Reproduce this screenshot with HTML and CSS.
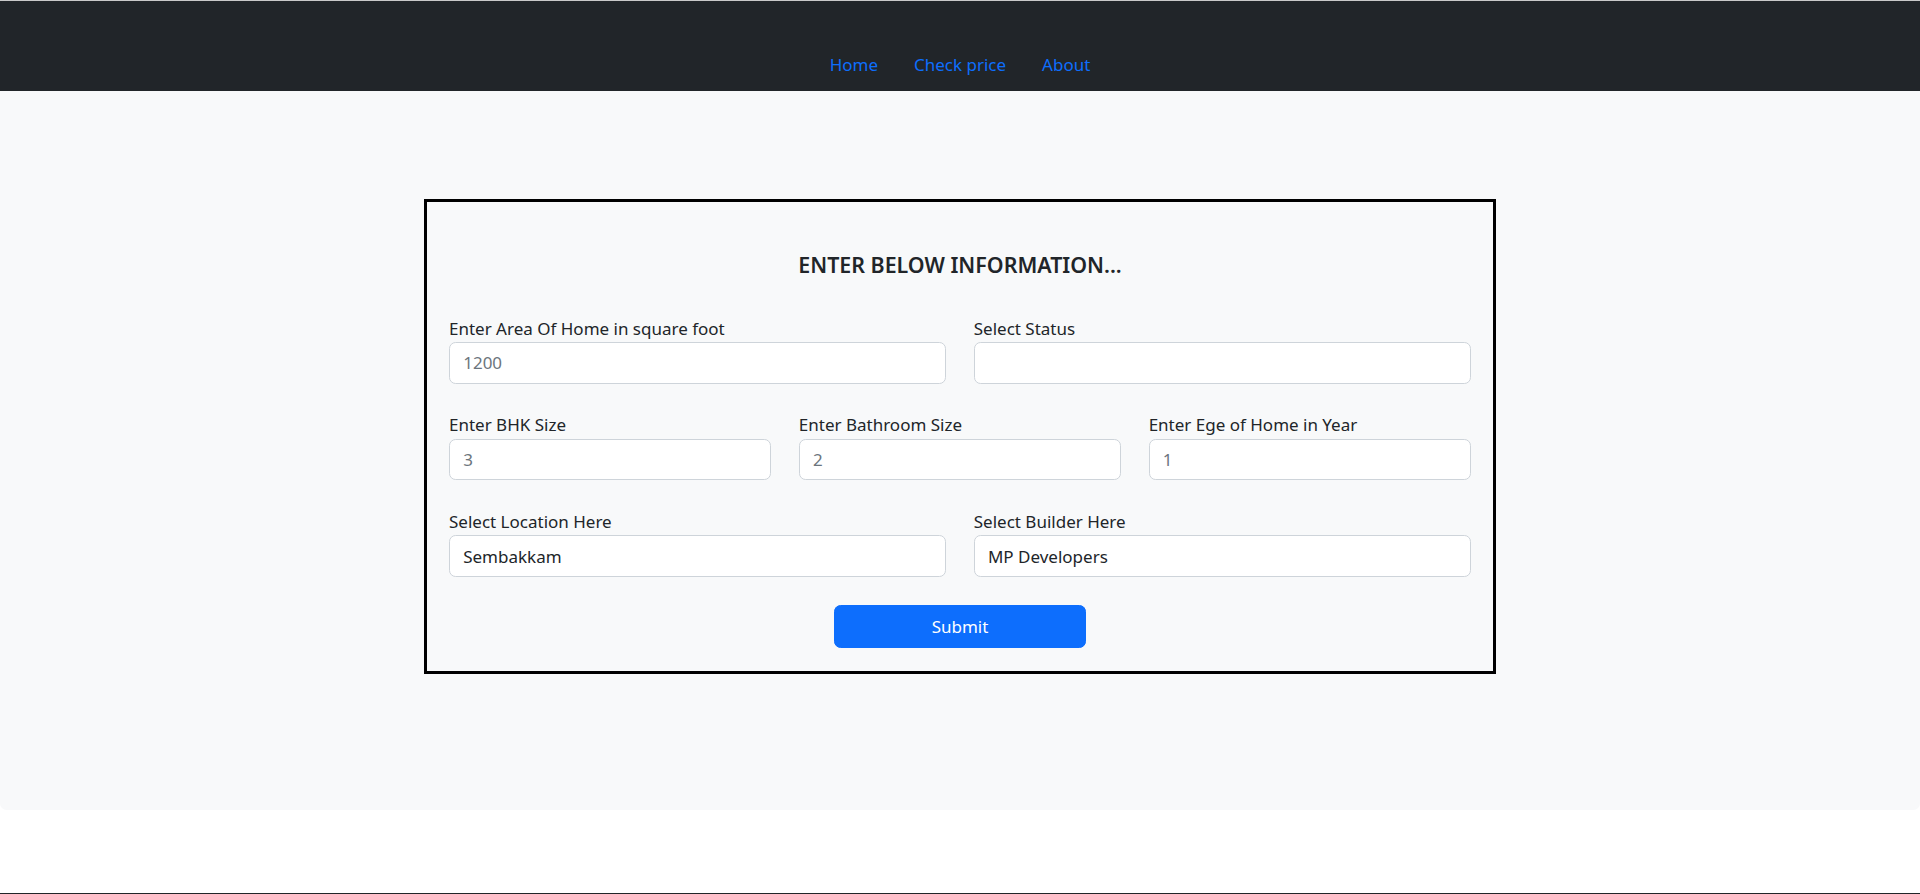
FILE: index.html
```html
<!DOCTYPE html>
<html lang="en">
<head>
<meta charset="utf-8">
<title>Home Price</title>
<link rel="stylesheet" href="styles.css">
</head>
<body>
<nav class="navbar">
  <ul class="nav-list">
    <li><a class="nav-link" href="#">Home</a></li>
    <li><a class="nav-link" href="#">Check price</a></li>
    <li><a class="nav-link" href="#">About</a></li>
  </ul>
</nav>
<main class="main">
  <form class="card">
    <h5 class="card-title">ENTER BELOW INFORMATION...</h5>
    <div class="form-row cols-2">
      <div class="field">
        <label class="form-label">Enter Area Of Home in square foot</label>
        <input class="form-control" type="text" placeholder="1200">
      </div>
      <div class="field">
        <label class="form-label">Select Status</label>
        <input class="form-control" type="text">
      </div>
    </div>
    <div class="form-row cols-3">
      <div class="field">
        <label class="form-label">Enter BHK Size</label>
        <input class="form-control" type="text" placeholder="3">
      </div>
      <div class="field">
        <label class="form-label">Enter Bathroom Size</label>
        <input class="form-control" type="text" placeholder="2">
      </div>
      <div class="field">
        <label class="form-label">Enter Ege of Home in Year</label>
        <input class="form-control" type="text" placeholder="1">
      </div>
    </div>
    <div class="form-row cols-2">
      <div class="field">
        <label class="form-label">Select Location Here</label>
        <input class="form-control" type="text" value="Sembakkam">
      </div>
      <div class="field">
        <label class="form-label">Select Builder Here</label>
        <input class="form-control" type="text" value="MP Developers">
      </div>
    </div>
    <button class="btn-submit" type="button">Submit</button>
  </form>
</main>
<footer class="footer"></footer>
</body>
</html>
```
FILE: styles.css
```css
* { box-sizing: border-box; }

html, body {
  margin: 0;
  padding: 0;
}

body {
  background: #ffffff;
  color: #212529;
  font-family: "Noto Sans", "Open Sans", sans-serif;
  font-size: 17px;
  line-height: 26.4px;
}

.navbar {
  background: #212529;
  border-top: 1px solid #c9c9c9;
  padding: 51px 0 12.6px;
}

.nav-list {
  list-style: none;
  margin: 0;
  padding: 0;
  display: flex;
  justify-content: center;
}

.nav-link {
  display: block;
  padding: 0 18px;
  color: #0d6efd;
  text-decoration: none;
  line-height: 26.4px;
}

.main {
  background: #f8f9fa;
  border-radius: 0 0 6.6px 6.6px;
  padding: 108px 0 136px;
}

.card {
  width: 1072px;
  margin: 0 0 0 calc(50% - 536px);
  border: 3px solid #000000;
  padding: 22px 22px 23px;
}

.card-title {
  margin: 27.7px 0 37.5px;
  text-align: center;
  font-size: 21.4px;
  line-height: 26.4px;
  font-weight: 600;
  color: #212529;
}

.form-row {
  display: grid;
  column-gap: 27.5px;
  margin-bottom: 28.4px;
}

.cols-2 { grid-template-columns: 1fr 1fr; }
.cols-3 { grid-template-columns: 1fr 1fr 1fr; }

.field {
  display: flex;
  flex-direction: column;
}

.form-label {
  display: block;
  line-height: 26.4px;
  color: #212529;
}

.form-control {
  display: block;
  width: 100%;
  height: 41.8px;
  padding: 6.6px 13.2px;
  font-family: inherit;
  font-size: 17px;
  line-height: 26.4px;
  color: #212529;
  background: #ffffff;
  border: 1px solid #ced4da;
  border-radius: 6.6px;
  outline: none;
}

.form-control::placeholder {
  color: #6c757d;
  opacity: 1;
}

.btn-submit {
  display: block;
  width: 252px;
  height: 42.7px;
  margin: 0 auto;
  background: #0d6efd;
  color: #ffffff;
  border: 1px solid #0d6efd;
  border-radius: 6.6px;
  font-family: inherit;
  font-size: 17px;
  line-height: 26.4px;
  cursor: pointer;
}

.footer {
  margin-top: 83px;
  height: 60px;
  background: #212529;
}
```
